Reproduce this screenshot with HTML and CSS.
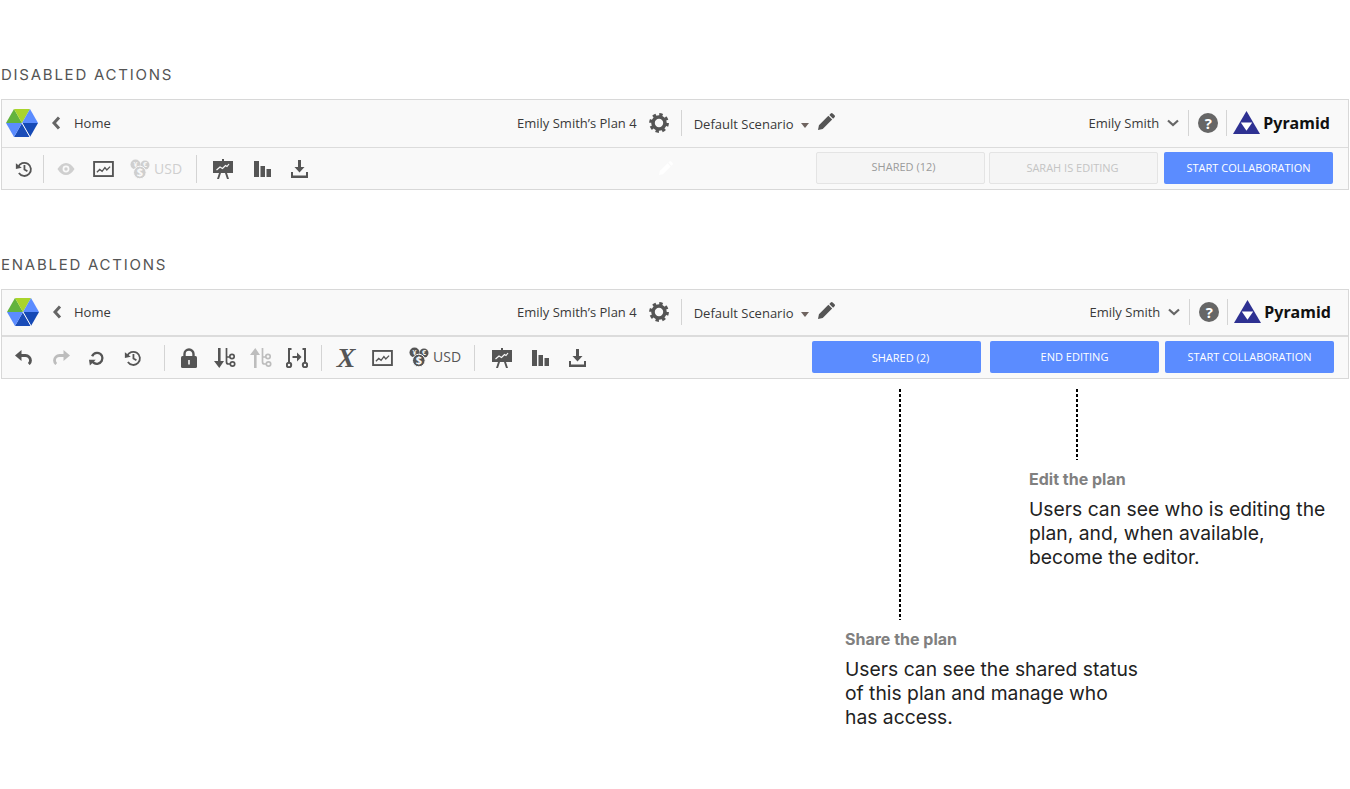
FILE: index.html
```html
<!DOCTYPE html>
<html lang="en">
<head>
<meta charset="utf-8">
<title>Toolbar actions</title>
<link rel="stylesheet" href="styles.css">
</head>
<body>
<svg class="defs" aria-hidden="true">
  <symbol id="logo" viewBox="0 0 32 28">
    <path fill="#62b33e" d="M8 0 0 14h16z"/>
    <path fill="#a9d42c" d="M8 0h16l-8 14z"/>
    <path fill="#5b8cff" d="M24 0l8 14H16z"/>
    <path fill="#1549b5" d="M32 14l-8 14-8-14z"/>
    <path fill="#1a4cb8" d="M24 28H8l8-14z"/>
    <path fill="#5b8cff" d="M8 28 0 14h16z"/>
    <path stroke="#fff" stroke-width="1" d="M16 14l8 14"/>
  </symbol>
  <symbol id="chev" viewBox="0 0 10 14"><path fill="none" stroke="currentColor" stroke-width="3" d="M8 1.500 3 7l5 5.500"/></symbol>
  <symbol id="chevd" viewBox="0 0 12 8"><path fill="none" stroke="currentColor" stroke-width="2.200" d="M1 1.500 6 6l5-4.500"/></symbol>
  <symbol id="gear" viewBox="0 0 20 20">
    <circle cx="10" cy="10" r="6" fill="none" stroke="currentColor" stroke-width="3.600"/>
    <circle cx="10" cy="10" r="8.300" fill="none" stroke="currentColor" stroke-width="3.200" stroke-dasharray="3.300 3.220"/>
  </symbol>
  <symbol id="pencil" viewBox="0 0 18 18"><path fill="currentColor" d="M0 18l1-5L11 3l4 4L5 17zM12 2l1.500-1.500q1-1 2 0l2 2q1 1 0 2L16 6z"/></symbol>
  <symbol id="history" viewBox="0 0 20 20">
    <path fill="none" stroke="currentColor" stroke-width="2" d="M3.500 8a7.300 7.300 0 1 1 .8 6.500"/>
    <path fill="currentColor" d="M1 3.500 7.500 8.500 1 10z"/>
    <path fill="none" stroke="currentColor" stroke-width="2" d="M10.500 5.500V10.500l3.300 2"/>
  </symbol>
  <symbol id="eye" viewBox="0 0 20 14"><path fill="currentColor" fill-rule="evenodd" d="M0 7Q4.500 0 10 0t10 7q-4.500 7-10 7T0 7zm10-4a4 4 0 1 0 0 8 4 4 0 0 0 0-8z"/><circle cx="10" cy="7" r="2" fill="currentColor"/></symbol>
  <symbol id="chart" viewBox="0 0 22 17">
    <rect x="1" y="1" width="20" height="15" fill="none" stroke="currentColor" stroke-width="2"/>
    <path fill="none" stroke="currentColor" stroke-width="1.400" d="M4 12l3-3 2.500 2 3-4 2 2.500L18 6"/>
  </symbol>
  <symbol id="present" viewBox="0 0 20 20">
    <path fill="currentColor" d="M0 2h20v12H14l2 6h-2l-2-6H8l-2 6H4l2-6H0zM9 0h2v2H9z"/>
    <path fill="none" stroke="#f9f9f9" stroke-width="1.200" d="M3.500 11l3.500-3 2.500 1.500 3-3 1.500 1L16 5"/>
  </symbol>
  <symbol id="bars" viewBox="0 0 17 16"><path fill="currentColor" d="M0 0h5v16H0zM6.500 5h4.500v11H6.500zM12.500 8h4.500v8h-4.500z"/></symbol>
  <symbol id="download" viewBox="0 0 17 18"><path fill="currentColor" d="M7 0h3v7h3.500L8.500 12.500 3.500 7H7zM0 12h2v3.500h13V12h2v6H0z"/></symbol>
  <symbol id="undo" viewBox="0 0 18 15">
    <path fill="currentColor" d="M0 5.500 6.500 0v11z"/>
    <path fill="none" stroke="currentColor" stroke-width="2.800" d="M5 5.500h5.500a5 5 0 0 1 5 5c0 1.500-.7 2.700-1.700 3.500"/>
  </symbol>
  <symbol id="redo" viewBox="0 0 18 15">
    <path fill="currentColor" d="M18 5.500 11.500 0v11z"/>
    <path fill="none" stroke="currentColor" stroke-width="2.800" d="M13 5.500H7.500a5 5 0 0 0-5 5c0 1.500.7 2.700 1.700 3.500"/>
  </symbol>
  <symbol id="refresh" viewBox="0 0 18 18">
    <path fill="none" stroke="currentColor" stroke-width="2.600" d="M3.500 7a6 6 0 0 1 11-.5 6.300 6.300 0 0 1-5 9 6 6 0 0 1-6-3.500"/>
    <path fill="currentColor" d="M0 11h7.500L1 17.500z"/>
  </symbol>
  <symbol id="lock" viewBox="0 0 16 20">
    <path fill="none" stroke="currentColor" stroke-width="2.400" d="M3.500 9V6a4.500 4.500 0 0 1 9 0v3"/>
    <rect y="8" width="16" height="12" rx="1.500" fill="currentColor"/>
    <path fill="#f9f9f9" d="M7.200 12h1.600v4.500H7.200z"/>
  </symbol>
  <symbol id="tree-down" viewBox="0 0 22 20">
    <path fill="currentColor" d="M4 0h2.600v13H10l-4.700 7L0 13h4z"/>
    <g fill="none" stroke="currentColor" stroke-width="1.700">
      <path d="M12.500 0v14q0 2 2 2h2M12.500 9h3"/>
      <circle cx="18" cy="8.500" r="2.200"/><circle cx="18.500" cy="16" r="2.200"/>
    </g>
  </symbol>
  <symbol id="tree-up" viewBox="0 0 22 20">
    <path fill="currentColor" d="M4 20h2.600V7H10L5.300 0 0 7h4z"/>
    <g fill="none" stroke="currentColor" stroke-width="1.700">
      <path d="M12.500 0v14q0 2 2 2h2M12.500 9h3"/>
      <circle cx="18" cy="8.500" r="2.200"/><circle cx="18.500" cy="16" r="2.200"/>
    </g>
  </symbol>
  <symbol id="merge" viewBox="0 0 22 20">
    <g fill="none" stroke="currentColor" stroke-width="2">
      <path d="M5.500 1H3v14M16.500 1H19v14"/>
      <circle cx="3" cy="17" r="2.200"/><circle cx="19" cy="17" r="2.200"/>
      <path d="M6.500 9h6"/>
    </g>
    <path fill="currentColor" d="M11 4.500 15.500 9 11 13.500z"/>
  </symbol>
  <symbol id="brand" viewBox="0 0 26 22">
    <path fill="#2e3192" d="M13 0l13 22H0z"/>
    <path fill="#fff" d="M7.500 11h11L13 19z"/>
  </symbol>
</svg>

<main class="page">
  <h2 class="heading heading-first">DISABLED ACTIONS</h2>
  <section class="toolbar">
    <div class="top">
      <div class="top-left">
        <svg class="logo"><use href="#logo"/></svg>
        <svg class="back"><use href="#chev"/></svg>
        <span class="label home">Home</span>
      </div>
      <div class="top-mid">
        <span class="label">Emily Smith’s Plan 4</span>
        <svg class="gear"><use href="#gear"/></svg>
        <i class="sep sep-top sep-mid"></i>
        <span class="label scenario">Default Scenario</span>
        <i class="caret"></i>
        <svg class="pencil"><use href="#pencil"/></svg>
      </div>
      <div class="top-right">
        <span class="label">Emily Smith</span>
        <svg class="chevd"><use href="#chevd"/></svg>
        <i class="sep sep-top sep-user"></i>
        <span class="help">?</span>
        <i class="sep sep-top sep-brand"></i>
        <svg class="brand"><use href="#brand"/></svg>
        <span class="brand-name">Pyramid</span>
      </div>
    </div>
    <div class="bottom">
      <div class="tools tools-a">
        <svg class="ic ic-history"><use href="#history"/></svg>
        <i class="sep sep-a1"></i>
        <svg class="ic ic-eye off"><use href="#eye"/></svg>
        <svg class="ic ic-chart ic-chart-a"><use href="#chart"/></svg>
        <span class="currency off">
          <svg class="ic ic-coins" viewBox="0 0 20 20">
            <circle cx="5.500" cy="5.500" r="5" fill="currentColor"/>
            <circle cx="15" cy="6" r="4.500" fill="currentColor"/>
            <circle cx="9.800" cy="13.500" r="6.300" fill="currentColor" stroke="#f9f9f9" stroke-width="1"/>
            <text class="coin-s" x="5.500" y="8">¥</text>
            <text class="coin-s" x="15" y="8.400">€</text>
            <text class="coin-l" x="9.800" y="17">$</text>
          </svg>USD</span>
        <i class="sep sep-a2"></i>
        <div class="group">
          <svg class="ic ic-present"><use href="#present"/></svg>
          <svg class="ic ic-bars"><use href="#bars"/></svg>
          <svg class="ic ic-download"><use href="#download"/></svg>
        </div>
      </div>
      <svg class="ghost-pencil"><use href="#pencil"/></svg>
      <div class="buttons buttons-a">
        <span class="btn btn-off btn-shared">SHARED (12)</span>
        <span class="btn btn-off btn-faint">SARAH IS EDITING</span>
        <span class="btn btn-on btn-start">START COLLABORATION</span>
      </div>
    </div>
  </section>

  <h2 class="heading heading-second">ENABLED ACTIONS</h2>
  <section class="toolbar toolbar-b">
    <div class="top">
      <div class="top-left">
        <svg class="logo"><use href="#logo"/></svg>
        <svg class="back"><use href="#chev"/></svg>
        <span class="label home">Home</span>
      </div>
      <div class="top-mid">
        <span class="label">Emily Smith’s Plan 4</span>
        <svg class="gear"><use href="#gear"/></svg>
        <i class="sep sep-top sep-mid"></i>
        <span class="label scenario">Default Scenario</span>
        <i class="caret"></i>
        <svg class="pencil"><use href="#pencil"/></svg>
      </div>
      <div class="top-right">
        <span class="label">Emily Smith</span>
        <svg class="chevd"><use href="#chevd"/></svg>
        <i class="sep sep-top sep-user"></i>
        <span class="help">?</span>
        <i class="sep sep-top sep-brand"></i>
        <svg class="brand"><use href="#brand"/></svg>
        <span class="brand-name">Pyramid</span>
      </div>
    </div>
    <div class="bottom">
      <div class="tools tools-b">
        <div class="group group-1">
          <svg class="ic ic-undo"><use href="#undo"/></svg>
          <svg class="ic ic-undo dim"><use href="#redo"/></svg>
          <svg class="ic ic-refresh"><use href="#refresh"/></svg>
          <svg class="ic ic-history"><use href="#history"/></svg>
        </div>
        <i class="sep sep-b1"></i>
        <div class="group group-2">
          <svg class="ic ic-lock"><use href="#lock"/></svg>
          <svg class="ic ic-tree"><use href="#tree-down"/></svg>
          <svg class="ic ic-tree dim"><use href="#tree-up"/></svg>
          <svg class="ic ic-tree"><use href="#merge"/></svg>
        </div>
        <i class="sep sep-b2"></i>
        <span class="formula">X</span>
        <svg class="ic ic-chart ic-chart-b"><use href="#chart"/></svg>
        <span class="currency currency-b">
          <svg class="ic ic-coins" viewBox="0 0 20 20">
            <circle cx="5.500" cy="5.500" r="5" fill="currentColor"/>
            <circle cx="15" cy="6" r="4.500" fill="currentColor"/>
            <circle cx="9.800" cy="13.500" r="6.300" fill="currentColor" stroke="#f9f9f9" stroke-width="1"/>
            <text class="coin-s" x="5.500" y="8">¥</text>
            <text class="coin-s" x="15" y="8.400">€</text>
            <text class="coin-l" x="9.800" y="17">$</text>
          </svg>USD</span>
        <i class="sep sep-b3"></i>
        <div class="group">
          <svg class="ic ic-present"><use href="#present"/></svg>
          <svg class="ic ic-bars"><use href="#bars"/></svg>
          <svg class="ic ic-download"><use href="#download"/></svg>
        </div>
      </div>
      <div class="buttons buttons-b">
        <span class="btn btn-on btn-shared btn-low">SHARED (2)</span>
        <span class="btn btn-on btn-end">END EDITING</span>
        <span class="btn btn-on btn-start">START COLLABORATION</span>
      </div>
    </div>
  </section>

  <i class="leader leader-share"></i>
  <i class="leader leader-edit"></i>
  <aside class="note note-edit">
    <h3>Edit the plan</h3>
    <p>Users can see who is editing the plan, and, when available, become the editor.</p>
  </aside>
  <aside class="note note-share">
    <h3>Share the plan</h3>
    <p>Users can see the shared status of this plan and manage who has access.</p>
  </aside>
</main>
</body>
</html>
```

FILE: styles.css
```css
* { box-sizing: border-box; }
html, body { margin: 0; padding: 0; background: #fff; }
body { width: 1350px; height: 789px; overflow: hidden; font-family: "Open Sans", sans-serif; color: #333; }
.defs { position: absolute; width: 0; height: 0; }
.page { position: relative; height: 789px; padding: 65px 1px 0; }

.heading { margin: 0; height: 18px; font: 400 15px/20px Inter, sans-serif; letter-spacing: 1.75px; color: #555; }
.heading-first { margin-bottom: 16px; }
.heading-second { margin-top: 65px; margin-bottom: 16px; }

.toolbar { width: 1348px; height: 91px; border: 1px solid #d8d8d8; background: #f9f9f9; display: flex; flex-direction: column; }
.toolbar-b { height: 90px; }
.top { height: 48px; flex: none; padding-bottom: 2px; border-bottom: 1px solid #dcdcdc; display: grid; grid-template-columns: 515px auto 1fr; align-items: center; }
.toolbar-b .top { height: 47px; padding-left: 1px; border-bottom-width: 2px; grid-template-columns: 514px auto 1fr; }
.top-left, .top-mid, .top-right, .bottom, .tools, .group, .buttons, .currency { display: flex; align-items: center; }
.top-left { padding-left: 4px; }
.top-right { justify-content: flex-end; padding-right: 18px; }
.toolbar-b .top-right { padding-right: 17px; }

.label { font-size: 13px; line-height: 18px; color: #3a3a3a; white-space: nowrap; }
.logo { width: 32px; height: 28px; }
.back { width: 10px; height: 14px; margin-left: 13px; color: #666; }
.home { margin-left: 13px; }
.toolbar-b .home { margin-left: 12px; }
.gear { width: 20px; height: 20px; margin-left: 12px; color: #555; }
.sep { display: block; flex: none; width: 1px; background: #d4d4d4; }
.sep-top { height: 26px; }
.sep-mid { margin-left: 12px; }
.scenario { margin-left: 12px; position: relative; top: 1px; }
.caret { width: 0; height: 0; margin: 5px 0 0 7px; border: 4px solid transparent; border-top: 5px solid #6f6460; border-bottom: 0; }
.pencil { width: 17px; height: 17px; margin-left: 9px; margin-top: -2px; color: #555; }
.chevd { width: 12px; height: 8px; margin-left: 8px; color: #666; }
.sep-user { margin-left: 9px; }
.help { width: 20px; height: 20px; margin-left: 9px; border-radius: 50%; background: #666; color: #fff; font: 700 15px/20px "Open Sans", sans-serif; text-align: center; }
.sep-brand { margin-left: 8px; }
.brand { width: 27px; height: 23px; margin-left: 6px; }
.brand-name { margin-left: 3px; font: 700 16px/22px "Noto Sans", sans-serif; letter-spacing: .1px; color: #111; }

.bottom { flex: 1; min-height: 0; justify-content: space-between; position: relative; }
.ic { flex: none; color: #555; }
.off { color: #cfcfcf !important; }
.off .ic { color: #cfcfcf; }
.dim { color: #bdbdbd; }
.tools-a { padding-left: 13px; }
.tools-b { padding-left: 13px; }
.ic-history { width: 18px; height: 18px; }
.ic-eye { width: 18px; height: 12px; }
.ic-chart { width: 21px; height: 16px; }
.ic-coins { width: 20px; height: 20px; }
.ic-present { width: 20px; height: 20px; }
.ic-bars { width: 17px; height: 16px; }
.ic-download { width: 17px; height: 18px; }
.ic-undo { width: 18px; height: 15px; }
.ic-refresh { width: 16px; height: 16px; }
.ic-lock { width: 16px; height: 20px; margin-right: 3px; }
.ic-tree { width: 22px; height: 20px; }
.coin-s { font: 700 7px "Open Sans", sans-serif; fill: #f9f9f9; text-anchor: middle; }
.coin-l { font: 700 11px "Open Sans", sans-serif; fill: #f9f9f9; text-anchor: middle; }

.tools-a .group { gap: 20.5px; margin-left: 16px; }
.sep-a1 { height: 28px; margin-left: 10px; }
.tools-a .ic-eye { margin-left: 13px; }
.ic-chart-a { margin-left: 18px; }
.tools-a .currency { margin-left: 16px; }
.currency { font-size: 14px; line-height: 18px; gap: 4px; color: #555; }
.sep-a2 { height: 28px; margin-left: 14px; }

.group-1 { gap: 19px; }
.group-2 { gap: 14px; margin-left: 16px; }
.sep-b1 { height: 26px; margin-left: 22px; }
.sep-b2 { height: 26px; margin-left: 13px; }
.sep-b3 { height: 26px; margin-left: 13px; }
.formula { margin-left: 13px; width: 22px; font: italic 700 28px/24px "Liberation Serif", serif; color: #555; text-align: center; }
.ic-chart-b { margin-left: 15px; }
.currency-b { margin-left: 16px; margin-top: -1px; }
.tools-b > .group:last-child { gap: 20px; margin-left: 17px; }

.ghost-pencil { position: absolute; left: 657px; top: 13px; width: 14px; height: 14px; color: #fff; }
.buttons { height: 32px; }
.buttons-a { margin-right: 15px; margin-bottom: 2px; }
.buttons-b { margin-right: 14px; margin-top: -1px; }
.btn { display: block; width: 169px; height: 32px; border-radius: 2px; font-size: 11px; line-height: 31px; text-align: center; white-space: nowrap; }
.btn-off { background: #f5f5f5; border: 1px solid #e4e4e4; color: #9b9b9b; line-height: 27px; padding-left: 6px; }
.btn-faint { margin-left: 4px; color: #c4c4c4; line-height: 29px; padding-left: 0; padding-right: 2px; }
.btn-on { background: #5b8cff; color: #fff; }
.buttons-a .btn-start { margin-left: 6px; }
.btn-end { margin-left: 9px; }
.buttons-b .btn-start { margin-left: 6px; }
.btn-low { line-height: 34px; padding-left: 8px; }

.leader { position: absolute; width: 2px; background-image: linear-gradient(#000 60%, transparent 60%); background-size: 2px 5px; }
.leader-share { left: 899px; top: 389px; height: 231px; }
.leader-edit { left: 1076px; top: 389px; height: 71px; }

.note { position: absolute; font-family: Inter, sans-serif; }
.note h3 { margin: 0 0 8px; font: 700 16px/20px Inter, sans-serif; color: #808080; }
.note p { margin: 0; font-size: 19.3px; line-height: 24px; color: #222; }
.note-edit { left: 1029px; top: 469px; width: 300px; }
.note-share { left: 845px; top: 629px; width: 300px; }
```
